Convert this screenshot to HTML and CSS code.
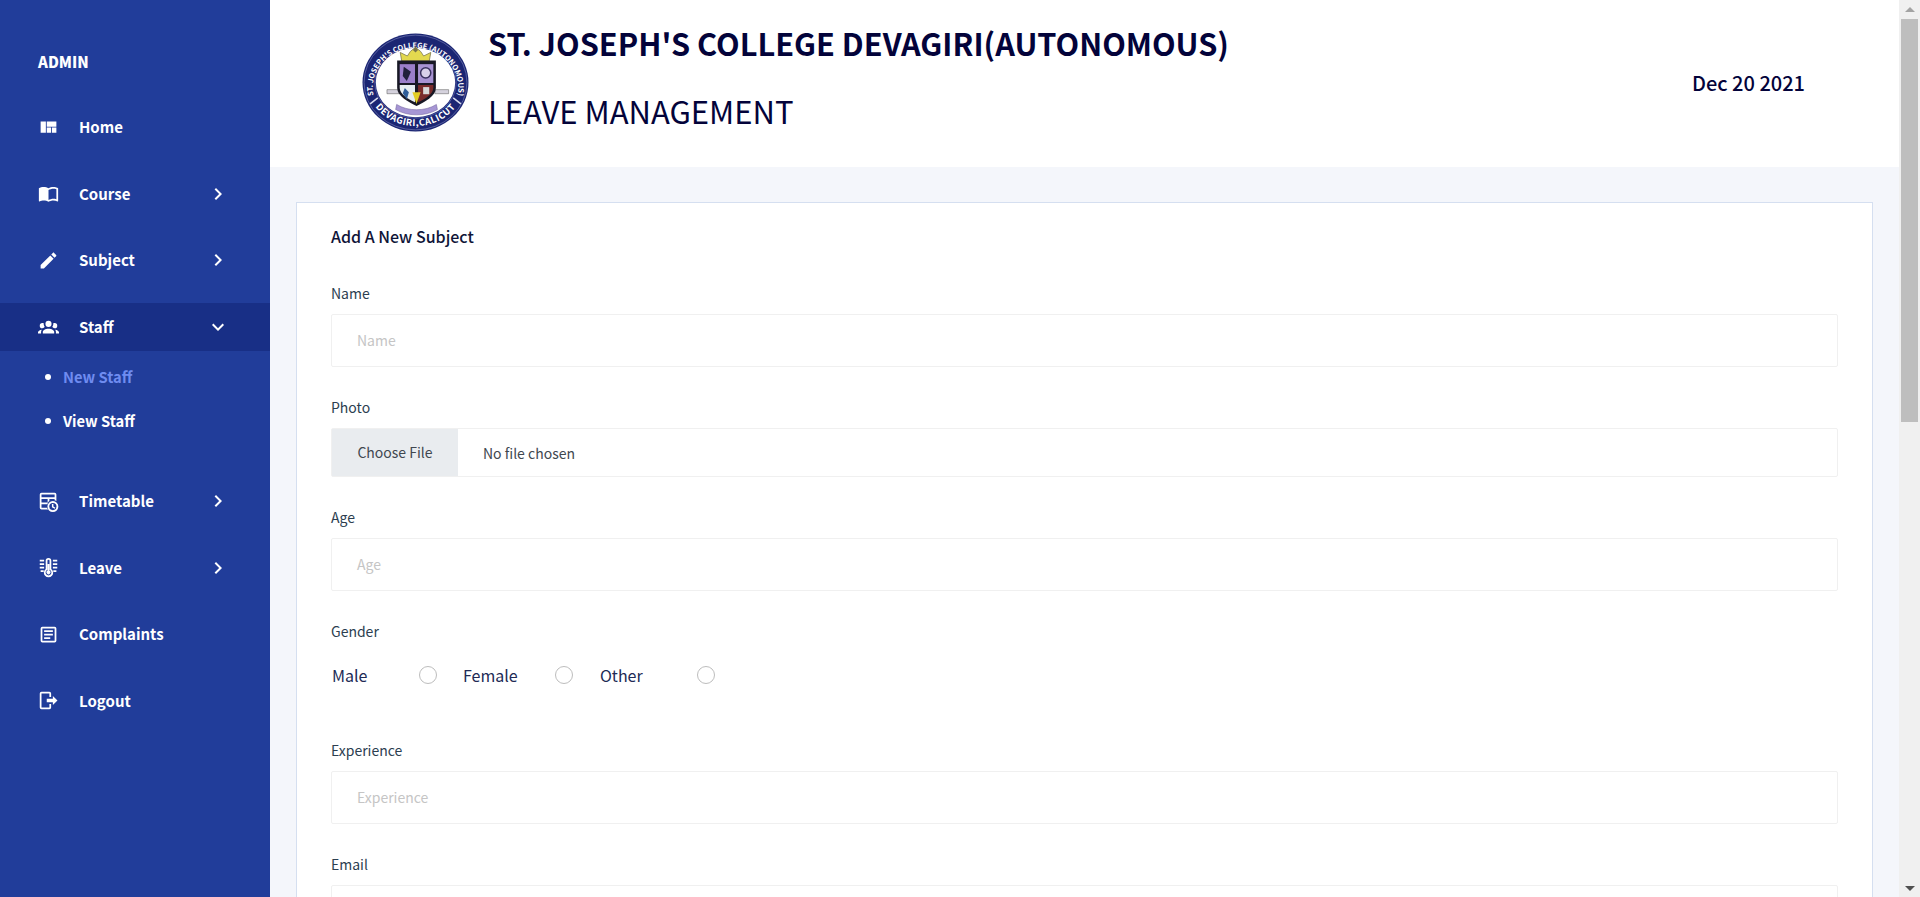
FILE: index.html
```html
<!DOCTYPE html>
<html lang="en">
<head>
<meta charset="utf-8">
<title>Leave Management</title>
<link rel="stylesheet" href="styles.css">
</head>
<body>
<div class="app">
  <aside class="sidebar">
    <div class="brand">ADMIN</div>
    <nav class="nav">
      <a class="item"><svg class="ic" viewBox="0 0 24 24"><path d="M10,18H15V12H10M3,18H9V5H3M16,18H21V12H16M10,5V11H21V5H10Z"/></svg><span class="label">Home</span></a>
      <a class="item"><svg class="ic" viewBox="0 0 24 24"><path d="M21,5C19.89,4.65 18.67,4.5 17.5,4.5C15.55,4.5 13.45,4.9 12,6C10.55,4.9 8.45,4.5 6.5,4.5C4.55,4.5 2.45,4.9 1,6V20.65C1,20.9 1.25,21.15 1.5,21.15C1.6,21.15 1.65,21.1 1.75,21.1C3.1,20.45 5.05,20 6.5,20C8.45,20 10.55,20.4 12,21.5C13.35,20.65 15.8,20 17.5,20C19.15,20 20.85,20.3 22.25,21.05C22.35,21.1 22.4,21.1 22.5,21.1C22.75,21.1 23,20.85 23,20.6V6C22.4,5.55 21.75,5.25 21,5M21,18.5C19.9,18.15 18.7,18 17.5,18C15.8,18 13.35,18.65 12,19.5V8C13.35,7.15 15.8,6.5 17.5,6.5C18.7,6.5 19.9,6.65 21,7V18.5Z"/></svg><span class="label">Course</span><svg class="chev" viewBox="0 0 24 24"><path d="M8.59,16.58L13.17,12L8.59,7.41L10,6L16,12L10,18L8.59,16.58Z"/></svg></a>
      <a class="item"><svg class="ic" viewBox="0 0 24 24"><path d="M20.71,7.04C21.1,6.65 21.1,6 20.71,5.63L18.37,3.29C18,2.9 17.35,2.9 16.96,3.29L15.12,5.12L18.87,8.87M3,17.25V21H6.75L17.81,9.93L14.06,6.18L3,17.25Z"/></svg><span class="label">Subject</span><svg class="chev" viewBox="0 0 24 24"><path d="M8.59,16.58L13.17,12L8.59,7.41L10,6L16,12L10,18L8.59,16.58Z"/></svg></a>
      <a class="item active"><svg class="ic" viewBox="0 0 24 24"><path d="M12,5.5A3.5,3.5 0 0,1 15.5,9A3.5,3.5 0 0,1 12,12.5A3.5,3.5 0 0,1 8.5,9A3.5,3.5 0 0,1 12,5.5M5,8C5.56,8 6.08,8.15 6.53,8.42C6.38,9.85 6.8,11.27 7.66,12.38C7.16,13.34 6.16,14 5,14A3,3 0 0,1 2,11A3,3 0 0,1 5,8M19,8A3,3 0 0,1 22,11A3,3 0 0,1 19,14C17.84,14 16.84,13.34 16.34,12.38C17.2,11.27 17.62,9.85 17.47,8.42C17.92,8.15 18.44,8 19,8M5.5,18.25C5.5,16.18 8.41,14.5 12,14.5C15.59,14.5 18.5,16.18 18.5,18.25V20H5.5V18.25M0,20V18.5C0,17.11 1.89,15.94 4.45,15.6C3.86,16.28 3.5,17.22 3.5,18.25V20H0M24,20H20.5V18.25C20.5,17.22 20.14,16.28 19.55,15.6C22.11,15.94 24,17.11 24,18.5V20Z"/></svg><span class="label">Staff</span><svg class="chev" viewBox="0 0 24 24"><path d="M7.41,8.58L12,13.17L16.59,8.58L18,10L12,16L6,10L7.41,8.58Z"/></svg></a>
      <ul class="sub">
        <li class="sub-item current">New Staff</li>
        <li class="sub-item">View Staff</li>
      </ul>
      <a class="item"><svg class="ic" viewBox="0 0 24 24"><path fill-rule="evenodd" d="M4,2H19A2,2 0 0,1 21,4V11.4A7,7 0 0,0 19,10.5V9H13V11.5A7,7 0 0,0 11.5,13H11V9H4V13H11V15H4V19H10.3A7,7 0 0,0 11.6,21H4A2,2 0 0,1 2,19V4A2,2 0 0,1 4,2M4,4V7H19V4H4Z"/><path fill-rule="evenodd" d="M17,11.5A6.25,6.25 0 1,1 17,24A6.25,6.25 0 1,1 17,11.5M17,13.6A4.15,4.15 0 1,0 17,21.9A4.15,4.15 0 1,0 17,13.6M15.9,14.8H17.6V17.6L19.9,19L19,20.4L15.9,18.5Z"/></svg><span class="label">Timetable</span><svg class="chev" viewBox="0 0 24 24"><path d="M8.59,16.58L13.17,12L8.59,7.41L10,6L16,12L10,18L8.59,16.58Z"/></svg></a>
      <a class="item"><svg class="ic" viewBox="0 0 24 24"><path d="M2,3H7V5H2ZM17,3H22V5H17ZM2,7H7V9H2ZM17,7H22V9H17ZM2,11H7V13H2ZM17,11H22V13H17ZM3,15H6.5V17H3ZM17.5,15H21V17H17.5Z"/><path fill-rule="evenodd" d="M12,1A3.2,3.2 0 0,1 15.2,4.2V13.6A5.3,5.3 0 1,1 8.8,13.6V4.2A3.2,3.2 0 0,1 12,1M12,3A1.2,1.2 0 0,0 10.8,4.2V14.7A3.3,3.3 0 1,0 13.2,14.7V4.2A1.2,1.2 0 0,0 12,3M11,8H13V15.5A2.2,2.2 0 1,1 11,15.5Z"/></svg><span class="label">Leave</span><svg class="chev" viewBox="0 0 24 24"><path d="M8.59,16.58L13.17,12L8.59,7.41L10,6L16,12L10,18L8.59,16.58Z"/></svg></a>
      <a class="item"><svg class="ic" viewBox="0 0 24 24"><path fill-rule="evenodd" d="M5,3H19A2,2 0 0,1 21,5V19A2,2 0 0,1 19,21H5A2,2 0 0,1 3,19V5A2,2 0 0,1 5,3M5,5V19H19V5H5M7,7H17V9H7V7M7,11H17V13H7V11M7,15H14V17H7V15Z"/></svg><span class="label">Complaints</span></a>
      <a class="item"><svg class="ic" viewBox="0 0 24 24"><path d="M17,17.25V14H10V10H17V6.75L22.25,12L17,17.25M13,2A2,2 0 0,1 15,4V8H13V4H4V20H13V16H15V20A2,2 0 0,1 13,22H4A2,2 0 0,1 2,20V4A2,2 0 0,1 4,2H13Z"/></svg><span class="label">Logout</span></a>
    </nav>
  </aside>

  <main class="main">
    <header class="topbar">
      <div class="crest">
        <svg class="logo" viewBox="0 0 210 194" role="img" aria-label="College crest">
          <defs>
            <path id="arcTop" d="M24,128 A84,78 0 1,1 186,128"/>
            <path id="arcBottom" d="M20,136 A96,87 0 0,0 190,136"/>
          </defs>
          <ellipse cx="105" cy="97" rx="104" ry="96" fill="#1b2573"/>
          <ellipse cx="105" cy="97" rx="101" ry="93" fill="none" stroke="#8f97c8" stroke-width="1"/>
          <ellipse cx="105" cy="97" rx="78" ry="68" fill="#fff"/>
          <ellipse cx="105" cy="97" rx="80" ry="70" fill="none" stroke="#5a63a8" stroke-width="1.5"/>
          <text class="logo-text"><textPath href="#arcTop" startOffset="50%" text-anchor="middle">ST. JOSEPH'S COLLEGE (AUTONOMOUS)</textPath></text>
          <text class="logo-text logo-text-low"><textPath href="#arcBottom" startOffset="50%" text-anchor="middle">DEVAGIRI,CALICUT</textPath></text>
          <path d="M16,139L31,127M194,139L179,127" stroke="#d8dbee" stroke-width="3"/>
          <path d="M78,55L75,38L89,45L95,36L105,28L115,36L121,45L135,38L132,55Z" fill="#e3d94f" stroke="#77734a" stroke-width="1.5"/>
          <path d="M100,33L105,26L110,33L105,38Z" fill="#77734a"/>
          <path d="M49,111H73V119H49ZM143,111H170V119H143Z" fill="#d5d2dd" stroke="#555" stroke-width="1"/>
          <path d="M69,54H145V108C145,124 122,136 107,143C92,136 69,124 69,108Z" fill="#181825"/>
          <rect x="74" y="61" width="30" height="37" fill="#9b7fca"/>
          <rect x="110" y="61" width="30" height="37" fill="#a792d2"/>
          <path d="M74,102H104V136C90,130 74,119 74,108Z" fill="#e6edf1"/>
          <path d="M110,102H140V108C140,119 124,130 110,136Z" fill="#7a2c2c"/>
          <path d="M99,116L115,116L107,139Z" fill="#e3cd25"/>
          <path d="M82,66L96,76L88,94L80,84Z" fill="#20203a"/>
          <circle cx="125" cy="78" r="10" fill="#d8d0ea" stroke="#39315f" stroke-width="3"/>
          <path d="M84,108L92,116L88,130L80,118Z" fill="#2f5d99"/>
          <path d="M120,106H132V120H120Z" fill="#d8d8d8"/>
          <path d="M68,140C90,154 124,154 146,140L148,150C124,164 90,164 66,150Z" fill="#a696d4" stroke="#6a5a98" stroke-width="1"/>
        </svg>
      </div>
      <div class="titles">
        <h1 class="college">ST. JOSEPH'S COLLEGE DEVAGIRI(AUTONOMOUS)</h1>
        <h2 class="module">LEAVE MANAGEMENT</h2>
      </div>
      <div class="date">Dec 20 2021</div>
    </header>

    <section class="content">
      <form class="card">
        <h4 class="card-title">Add A New Subject</h4>
        <div class="group">
          <label class="field-label">Name</label>
          <div class="input placeholder">Name</div>
        </div>
        <div class="group group-file">
          <label class="field-label">Photo</label>
          <div class="file"><span class="file-btn">Choose File</span><span class="file-name">No file chosen</span></div>
        </div>
        <div class="group">
          <label class="field-label">Age</label>
          <div class="input placeholder">Age</div>
        </div>
        <div class="group group-gender">
          <label class="field-label">Gender</label>
          <div class="radios">
            <span class="radio-text male">Male</span><span class="radio r1"></span>
            <span class="radio-text female">Female</span><span class="radio r2"></span>
            <span class="radio-text other">Other</span><span class="radio r3"></span>
          </div>
        </div>
        <div class="group">
          <label class="field-label">Experience</label>
          <div class="input placeholder">Experience</div>
        </div>
        <div class="group">
          <label class="field-label">Email</label>
          <div class="input"></div>
        </div>
      </form>
    </section>
  </main>

  <div class="scrollbar">
    <span class="arrow-up"></span>
    <span class="track"><span class="thumb"></span></span>
    <span class="arrow-down"></span>
  </div>
</div>
</body>
</html>
```
FILE: styles.css
```css
* { box-sizing: border-box; }
html, body { margin: 0; height: 897px; overflow: hidden; }
body {
  font-family: "Noto Sans CJK SC", "Noto Sans", sans-serif;
  color: #2c2e33;
  background: #f4f6fb;
}
.app { display: flex; height: 897px; }

/* sidebar */
.sidebar { width: 270px; flex: none; background: #213d9a; color: #fff; }
.brand { padding: 51px 0 0 38px; height: 103px; font-size: 15px; line-height: 22px; font-weight: 900; }
.nav { display: flex; flex-direction: column; }
.item {
  display: flex; align-items: center; height: 48px; margin-bottom: 18.5px;
  padding: 0 0 0 38px; font-size: 15px; font-weight: 700; color: #fff;
}
.item.active { background: #182f86; margin-bottom: 0; }
.ic { width: 21px; height: 21px; fill: #fff; flex: none; margin-right: 20px; }
.label { flex: 1; line-height: 22px; }
.chev { width: 24px; height: 24px; fill: #fff; flex: none; margin-right: 40px; }
.sub { list-style: none; margin: 0 0 30.5px; padding: 8px 0 0 63px; }
.sub-item { position: relative; height: 44px; line-height: 36px; font-size: 14.7px; font-weight: 700; }
.sub-item::before {
  content: ""; position: absolute; left: -18px; top: 15px;
  width: 6px; height: 6px; border-radius: 50%; background: #fff;
}
.current { color: #6f8cf0; }

/* main */
.main { flex: 1; min-width: 0; display: flex; flex-direction: column; }
.topbar { height: 167px; flex: none; background: #fff; display: flex; align-items: flex-start; }
.crest { margin: 33px 0 0 92px; width: 126px; flex: none; }
.logo { display: block; width: 107px; height: 99px; }
.logo-text { font-size: 14.6px; font-weight: 700; fill: #fff; }
.logo-text-low { font-size: 18px; letter-spacing: 1px; }
.titles { flex: 1; padding-top: 20px; }
.college { margin: 0; font-size: 30.7px; line-height: 46px; font-weight: 700; color: #03033a; }
.module { margin: 22px 0 0; font-size: 31px; line-height: 46px; font-weight: 400; color: #03033a; }
.date { margin: 68px 94px 0 0; font-size: 20px; line-height: 30px; font-weight: 500; color: #03033a; }

.content { padding: 35px 26px 0; flex: 1; min-height: 0; }
.card { background: #fff; border: 1px solid #d5dff0; padding: 20px 34px 0; height: 900px; }
.card-title { margin: 0 0 33px; font-size: 16px; line-height: 26px; font-weight: 500; color: #0f1538; }
.group { margin-bottom: 29px; }
.group-file { margin-bottom: 29px; }
.group-gender { margin-bottom: 44px; }
.field-label { display: block; font-size: 14px; line-height: 22px; margin-bottom: 10px; color: #2c3e50; }
.input {
  height: 53px; border: 1px solid #f0f0f0; border-radius: 2px; padding: 0 25px;
  font-size: 14px; line-height: 51px; background: #fff;
}
.placeholder { color: #c5c5c5; }
.file {
  display: flex; align-items: center; height: 49px; border: 1px solid #f0f0f0;
  border-radius: 2px; font-size: 14px; color: #40474f;
}
.file-btn { width: 126px; height: 47px; line-height: 47px; text-align: center; background: #e9ecef; }
.file-name { padding-left: 25px; }
.radios { display: flex; align-items: center; height: 40px; margin-top: 12.5px; font-size: 16px; color: #212a55; }
.radio-text { line-height: 26px; }
.radio { width: 18px; height: 18px; border-radius: 50%; border: 1px solid #bdbdbd; flex: none; background: #fff; }
.male { margin-left: 1px; width: 87px; }
.r1 { margin-right: 26px; }
.female { width: 92px; }
.r2 { margin-right: 27px; }
.other { width: 97px; }

/* scrollbar */
.scrollbar { width: 21px; flex: none; background: #f0f0f0; display: flex; flex-direction: column; align-items: center; }
.arrow-up { display: block; width: 0; height: 0; border-left: 5px solid transparent; border-right: 5px solid transparent; border-bottom: 5px solid #a3a3a3; border-top: 7px solid transparent; }
.track { flex: 1; width: 17px; margin-top: 7px; display: block; }
.thumb { display: block; height: 403px; background: #bebebe; }
.arrow-down { display: block; width: 0; height: 0; border-left: 5px solid transparent; border-right: 5px solid transparent; border-top: 5px solid #505050; margin-bottom: 6px; }
```
